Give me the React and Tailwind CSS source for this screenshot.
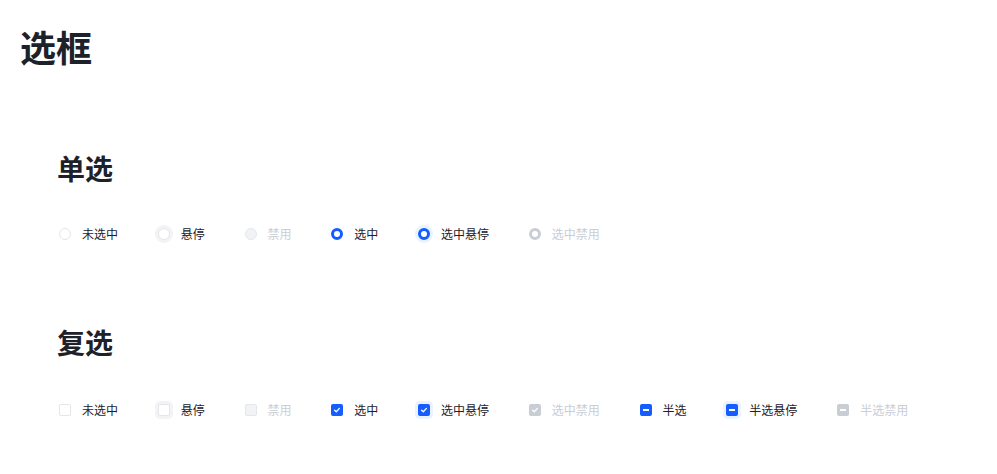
import React from "react";

function Radio({ state }) {
  let cls = "w-3 h-3 rounded-full shrink-0 box-border ";
  if (state === "default") cls += "border border-[#e5e6eb] bg-white";
  if (state === "hover") cls += "border border-[#e5e6eb] bg-white shadow-[0_0_0_3px_#f2f3f5]";
  if (state === "disabled") cls += "border border-[#e5e6eb] bg-[#f2f3f5]";
  if (state === "checked") cls += "border-[3.5px] border-[#165dff] bg-white";
  if (state === "checkedHover") cls += "border-[3.5px] border-[#165dff] bg-white shadow-[0_0_0_3px_#e8f3ff]";
  if (state === "checkedDisabled") cls += "border-[3.5px] border-[#c9cdd4] bg-white";
  return <span className={cls} />;
}

function Check() {
  return (
    <svg width="8" height="8" viewBox="0 0 8 8" fill="none">
      <path d="M1.6 4.2 L3.3 5.8 L6.4 2.4" stroke="white" strokeWidth="1.3" strokeLinecap="round" strokeLinejoin="round" />
    </svg>
  );
}

function Checkbox({ state }) {
  let cls = "w-3 h-3 rounded-[2px] shrink-0 box-border flex items-center justify-center ";
  let inner = null;
  if (state === "default") cls += "border border-[#e5e6eb] bg-white";
  if (state === "hover") cls += "border border-[#e5e6eb] bg-white shadow-[0_0_0_3px_#f2f3f5]";
  if (state === "disabled") cls += "border border-[#e5e6eb] bg-[#f2f3f5]";
  if (state === "checked") { cls += "bg-[#165dff]"; inner = <Check />; }
  if (state === "checkedHover") { cls += "bg-[#165dff] shadow-[0_0_0_3px_#e8f3ff]"; inner = <Check />; }
  if (state === "checkedDisabled") { cls += "bg-[#c9cdd4]"; inner = <Check />; }
  if (state === "half") { cls += "bg-[#165dff]"; inner = <span className="w-[6px] h-[2px] bg-white" />; }
  if (state === "halfHover") { cls += "bg-[#165dff] shadow-[0_0_0_3px_#e8f3ff]"; inner = <span className="w-[6px] h-[2px] bg-white" />; }
  if (state === "halfDisabled") { cls += "bg-[#c9cdd4]"; inner = <span className="w-[6px] h-[2px] bg-white" />; }
  return <span className={cls}>{inner}</span>;
}

function Item({ children, label, disabled }) {
  return (
    <div className="flex items-center gap-[11px] h-5">
      {children}
      <span className={"text-[12px] leading-5 " + (disabled ? "text-[#c9cdd4]" : "text-[#1d2129]")}>{label}</span>
    </div>
  );
}

export default function App() {
  const radios = [
    ["default", "未选中"],
    ["hover", "悬停"],
    ["disabled", "禁用", true],
    ["checked", "选中"],
    ["checkedHover", "选中悬停"],
    ["checkedDisabled", "选中禁用", true],
  ];
  const boxes = [
    ["default", "未选中"],
    ["hover", "悬停"],
    ["disabled", "禁用", true],
    ["checked", "选中"],
    ["checkedHover", "选中悬停"],
    ["checkedDisabled", "选中禁用", true],
    ["half", "半选"],
    ["halfHover", "半选悬停"],
    ["halfDisabled", "半选禁用", true],
  ];
  return (
    <div
      className="w-[997px] h-[474px] bg-white pt-[28px] pl-[20px]"
      style={{ fontFamily: '"Noto Sans CJK SC", "Noto Sans", sans-serif' }}
    >
      <h1 className="text-[36px] leading-none font-bold text-[#1d2129]">选框</h1>
      <div className="pl-[37px] mt-[90px]">
        <h2 className="text-[28px] leading-none font-bold text-[#1d2129]">单选</h2>
        <div className="flex items-center gap-[39.75px] mt-[42px] pl-[2px]">
          {radios.map(([s, l, d]) => (
            <Item key={l} label={l} disabled={d}>
              <Radio state={s} />
            </Item>
          ))}
        </div>
        <h2 className="text-[28px] leading-none font-bold text-[#1d2129] mt-[84px]">复选</h2>
        <div className="flex items-center gap-[39.75px] mt-[44px] pl-[2px]">
          {boxes.map(([s, l, d]) => (
            <Item key={l} label={l} disabled={d}>
              <Checkbox state={s} />
            </Item>
          ))}
        </div>
      </div>
    </div>
  );
}
